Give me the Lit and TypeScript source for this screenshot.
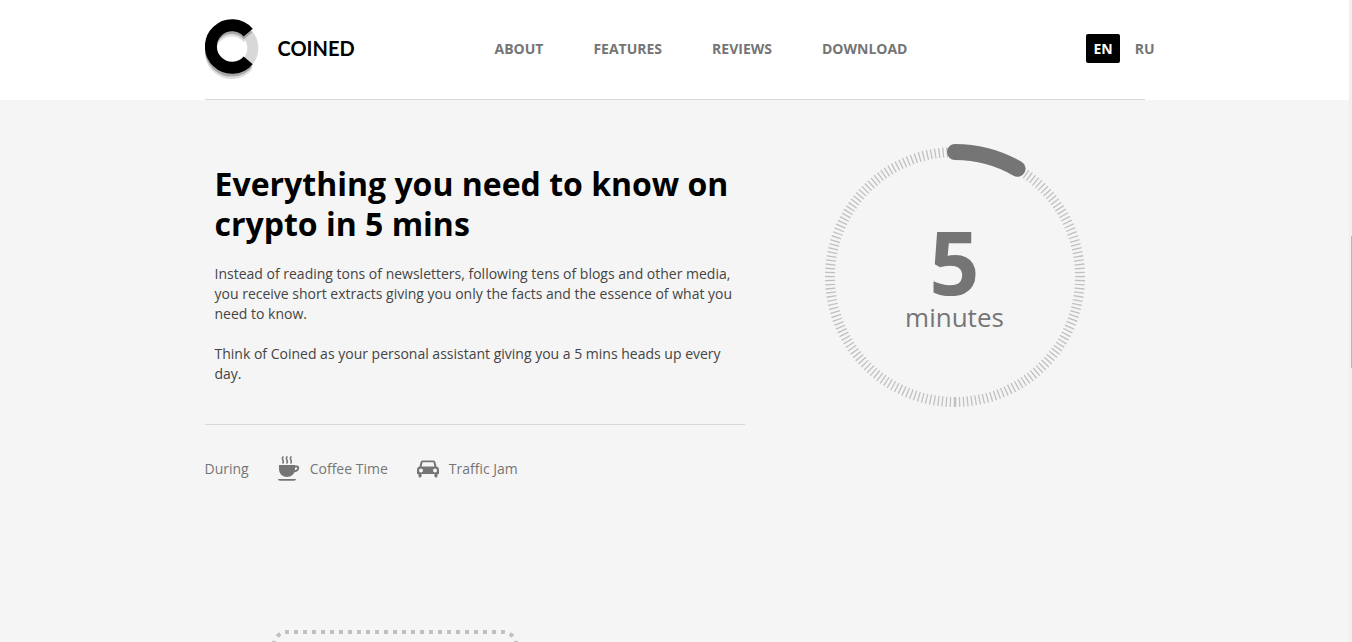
import { LitElement, html, css, svg } from "lit";
import { customElement } from "lit/decorators.js";

const NAV = ["About", "Features", "Reviews", "Download"];

const logo = svg`
  <svg class="mark" viewBox="0 -1 54 62" aria-hidden="true" fill="none" stroke-width="11">
    <path d="M43 14A21.300 21.300 0 1 0 43 41.500" stroke="#dedede" transform="translate(0 5.500)" />
    <circle cx="26.800" cy="29" r="21" stroke="#d8d8d8" />
    <path d="M43 14A21.300 21.300 0 1 0 43 41.500" stroke="#a8a8a8" transform="translate(0 3)" />
    <path d="M43.200 13.700A21.200 21.200 0 1 0 43.200 41.300" stroke="#000" stroke-width="12" />
  </svg>`;

const cup = svg`
  <svg class="cup" viewBox="0 0 22 26" aria-hidden="true">
    <g fill="none" stroke="#757575" stroke-width="1.500">
      <path d="M5.500 0.500C2 3 7.500 4.500 4.500 7.500" />
      <path d="M9.500 0.500C6 3 11.500 4.500 8.500 7.500" />
      <path d="M13.500 0.500C10 3 15.500 4.500 12.500 7.500" />
      <path d="M16 10.500H19Q20.300 10.500 20.200 12Q20 15 15.500 15.500" stroke-width="2" />
    </g>
    <path fill="#757575" d="M1 9H17V13C17 18 13 21 9 21S1 18 1 13ZM0 23H18Q18 24.800 16 24.800H2Q0 24.800 0 23Z" />
  </svg>`;

const car = svg`
  <svg class="car" viewBox="0 0 22 18" aria-hidden="true">
    <path fill="#757575" fill-rule="evenodd" d="M5.500 0.500H16.500Q18 0.500 18.400 2L19.500 6.500Q22 7 22 9.500V14H20.500V16Q20.500 17.500 19 17.500T17.500 16V14H4.500V16Q4.500 17.500 3 17.500T1.500 16V14H0V9.500Q0 7 2.500 6.500L3.600 2Q4 0.500 5.500 0.500ZM5.600 2.300L4.600 6.500H17.400L16.400 2.300ZM4 8.400A2 2 0 1 0 4 12.400A2 2 0 1 0 4 8.400ZM18 8.400A2 2 0 1 0 18 12.400A2 2 0 1 0 18 8.400Z" />
  </svg>`;

@customElement("app-root")
export class AppRoot extends LitElement {
  static styles = css`
    :host {
      display: grid;
      grid-template-columns: minmax(0, 1fr) 3px;
      height: 100vh;
      overflow: hidden;
      background: #f5f5f5;
      color: #757575;
      font: 14px/20px "Open Sans", sans-serif;
    }
    .page {
      min-width: 0;
      overflow: hidden;
    }
    .top {
      background: #fff;
    }
    .wrap {
      max-width: 940px;
      margin: 0 auto;
    }
    .bar {
      display: flex;
      align-items: center;
      height: 97px;
      padding-bottom: 2px;
      border-bottom: 1px solid #d8d8d8;
    }
    a {
      color: inherit;
      text-decoration: none;
    }
    .brand {
      display: flex;
      align-items: center;
      gap: 19px;
      width: 290px;
      color: #000;
      font: 700 20px/24px Lato, sans-serif;
    }
    .brand span {
      padding-bottom: 2px;
    }
    .mark {
      width: 54px;
      height: 62px;
    }
    nav {
      display: flex;
      gap: 50px;
      font-weight: 700;
      text-transform: uppercase;
    }
    .langs {
      display: flex;
      gap: 8px;
      margin-left: auto;
      margin-right: -17px;
    }
    .lang {
      border: 0;
      border-radius: 2px;
      padding: 5px 7px 4px;
      background: none;
      color: inherit;
      font: 700 14px/20px "Open Sans", sans-serif;
    }
    .lang.on {
      background: #000;
      color: #fff;
    }
    .hero {
      display: flex;
      gap: 80px;
      padding-top: 44px;
    }
    .story {
      flex: 0 1 540px;
    }
    .copy {
      padding: 20px 10px 40px;
      border-bottom: 1px solid #d8d8d8;
      color: #444;
    }
    h1 {
      margin: 0 0 20px;
      color: #000;
      font: 700 32px/40px "Open Sans", sans-serif;
    }
    p {
      margin: 0 0 20px;
    }
    p:last-child {
      margin: 0;
    }
    .during {
      display: flex;
      align-items: center;
      gap: 29px;
      margin: 31px 0 0;
      padding: 0;
      list-style: none;
    }
    .during li {
      display: flex;
      align-items: center;
      gap: 10px;
    }
    .cup {
      width: 22px;
      height: 26px;
    }
    .car {
      width: 22px;
      height: 18px;
    }
    .dial {
      display: grid;
      flex: 0 0 260px;
      height: 264px;
    }
    .dial > * {
      grid-area: 1 / 1;
    }
    .ring {
      width: 260px;
      height: 264px;
    }
    .value {
      padding-top: 75px;
      text-align: center;
    }
    .num {
      font-size: 88px;
      font-weight: 700;
      line-height: 84px;
    }
    .unit {
      font-size: 26px;
      line-height: 28px;
    }
    .dotted {
      display: block;
      width: 246px;
      height: 200px;
      margin: 148px 0 0 67px;
    }
    .track {
      padding-top: 236px;
      background: #f0f0f0;
    }
    .thumb {
      width: 1px;
      height: 132px;
      margin-left: auto;
      background: #b8b8b8;
    }
  `;

  render() {
    return html`
      <div class="page">
        <header class="top">
          <div class="wrap bar">
            <a class="brand" href="#">${logo}<span>COINED</span></a>
            <nav>${NAV.map((n) => html`<a href="#${n.toLowerCase()}">${n}</a>`)}</nav>
            <div class="langs">
              <button class="lang on">EN</button>
              <button class="lang">RU</button>
            </div>
          </div>
        </header>
        <main class="wrap">
          <section class="hero">
            <div class="story">
              <div class="copy">
                <h1>Everything you need to know on crypto in 5 mins</h1>
                <p>
                  Instead of reading tons of newsletters, following tens of blogs and other media,
                  you receive short extracts giving you only the facts and the essence of what you
                  need to know.
                </p>
                <p>Think of Coined as your personal assistant giving you a 5 mins heads up every day.</p>
              </div>
              <ul class="during">
                <li>During</li>
                <li>${cup}<span>Coffee Time</span></li>
                <li>${car}<span>Traffic Jam</span></li>
              </ul>
            </div>
            <div class="dial">
              <svg class="ring" viewBox="0 0 260 264" fill="none" aria-hidden="true">
                <path d="M130 258A125 125 0 1 1 192.500 24.750" stroke="#c0c0c0" stroke-width="10" stroke-dasharray="1.300 2.700" />
                <path d="M130 258A125 125 0 0 0 192.500 24.750" stroke="#c0c0c0" stroke-width="10" stroke-dasharray="1.300 2.700" />
                <path d="M130 8A125 125 0 0 1 192.500 24.750" stroke="#757575" stroke-width="16" stroke-linecap="round" />
              </svg>
              <div class="value">
                <div class="num">5</div>
                <div class="unit">minutes</div>
              </div>
            </div>
          </section>
          <svg class="dotted" viewBox="0 0 246 200" fill="none" stroke="#c0c0c0" stroke-width="4" stroke-dasharray="4 5" aria-hidden="true">
            <path d="M15 2H231A13 13 0 0 1 244 15V185A13 13 0 0 1 231 198H123" stroke-dashoffset="2" />
            <path d="M15 2A13 13 0 0 0 2 15V185A13 13 0 0 0 15 198H123" stroke-dashoffset="2" />
          </svg>
        </main>
      </div>
      <div class="track"><div class="thumb"></div></div>
    `;
  }
}
